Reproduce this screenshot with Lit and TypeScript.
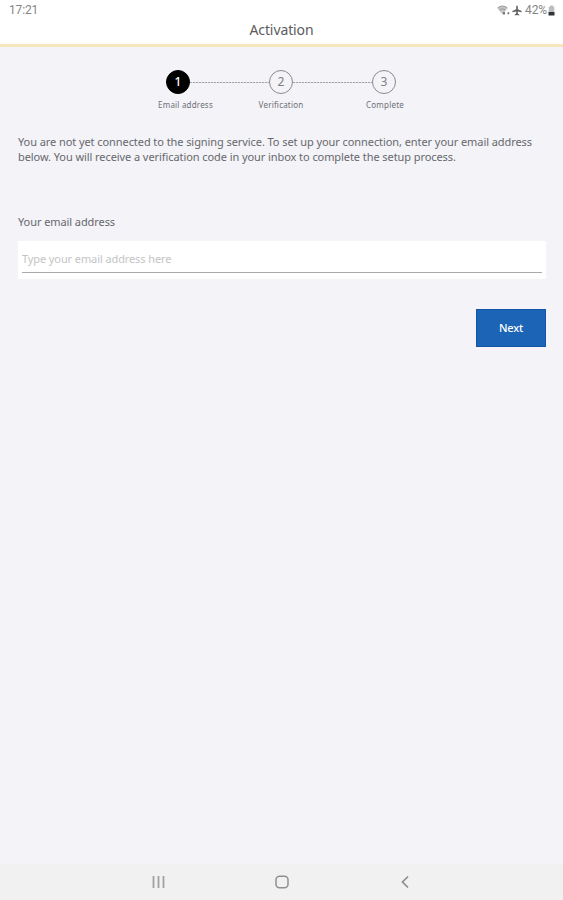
import { LitElement, html, css } from "lit";
import { customElement } from "lit/decorators.js";

@customElement("status-bar")
class StatusBar extends LitElement {
  static styles = css`
    :host {
      display: flex;
      justify-content: space-between;
      align-items: center;
      height: 20px;
      padding: 0 8px 0 9px;
      box-sizing: border-box;
      color: #858585;
      font: 12px/20px Roboto, sans-serif;
    }
    .right {
      display: flex;
      align-items: center;
    }
    .wifi { margin-right: 2px; }
    .plane { margin-right: 3px; }
    .time { letter-spacing: -0.15px; }
    .percent { letter-spacing: -0.1px; margin-right: 1px; }
    svg { display: block; }
  `;
  render() {
    return html`
      <span class="time">17:21</span>
      <span class="right">
        <svg class="wifi" width="13" height="11" viewBox="0 0 13 11">
          <path d="M0.5 3Q5.5-1 10.5 3L5.500 9.500Z" fill="#c4c4c4" />
          <path d="M0.5 3Q5.5-1 10.5 3M2.3 5Q5.5 2.7 8.5 5" fill="none" stroke="#999" stroke-width="1" />
          <path d="M6 7h2v2.600H6zM10.500 7.200h1.800v2h-1.800z" fill="#777" />
        </svg>
        <svg class="plane" width="10" height="11" viewBox="0 0 10 11">
          <path d="M5 .5q.8 0 .8 1.200v2.500L9.600 6v1.200L5.800 6.500v2l1.400 1v.9L5 9.900l-2.200.5v-.9l1.400-1v-2L.4 7.200V6l3.800-1.800V1.700Q4.200.5 5 .5z" fill="#606060" />
        </svg>
        <span class="percent">42%</span>
        <svg width="7" height="11" viewBox="0 0 7 11">
          <path d="M2 .5h3v1.200h1.300V7H.7V1.700H2z" fill="#bdbdbd" />
          <path d="M.5 7h6v3.500h-6z" fill="#333" />
        </svg>
      </span>
    `;
  }
}

@customElement("step-indicator")
class StepIndicator extends LitElement {
  static styles = css`
    :host {
      display: block;
      color: #707074;
      font-family: "Noto Sans", sans-serif;
    }
    .track {
      display: flex;
      align-items: center;
      margin-left: 166px;
    }
    .dot {
      width: 24px;
      height: 24px;
      flex: none;
      box-sizing: border-box;
      border: 1px solid #8a8a8e;
      border-radius: 50%;
      text-align: center;
      font-size: 12px;
      line-height: 22px;
      color: #808084;
    }
    .active {
      background: #000;
      border-color: #000;
      color: #fff;
      font-weight: 500;
    }
    .line {
      width: 79px;
      height: 1px;
      background: repeating-linear-gradient(90deg, #a4a4a8 0 2px, #dcdce0 2px 3px);
    }
    .labels {
      display: grid;
      grid-template-columns: 95px 96px 112px;
      margin: 5px 0 0 138px;
      text-align: center;
      font-size: 8px;
      line-height: 12px;
      letter-spacing: 0.2px;
    }
  `;
  render() {
    return html`
      <div class="track">
        <span class="dot active">1</span><span class="line"></span>
        <span class="dot">2</span><span class="line"></span>
        <span class="dot">3</span>
      </div>
      <div class="labels">
        <span>Email address</span><span>Verification</span><span>Complete</span>
      </div>
    `;
  }
}

@customElement("nav-bar")
class NavBar extends LitElement {
  static styles = css`
    :host {
      display: flex;
      justify-content: center;
      align-items: center;
      gap: 109px;
      height: 36px;
      background: #f1f1f1;
    }
    svg { display: block; }
  `;
  render() {
    return html`
      <svg width="14" height="14" viewBox="0 0 14 14" fill="none" stroke="#a2a2a2" stroke-width="1.8">
        <path d="M1.500 1v12M6.500 1v12M11.500 1v12" />
      </svg>
      <svg width="14" height="14" viewBox="0 0 14 14" fill="none" stroke="#909090" stroke-width="1.5">
        <rect x="1" y="1.300" width="12" height="11.400" rx="3.500" />
      </svg>
      <svg width="14" height="14" viewBox="0 0 14 14" fill="none" stroke="#8e8e8e" stroke-width="1.700">
        <path d="M10 1.500L4.500 7l5.500 5.500" />
      </svg>
    `;
  }
}

@customElement("app-root")
class AppRoot extends LitElement {
  static styles = css`
    :host {
      display: flex;
      flex-direction: column;
      height: 100vh;
      background: #f3f3f8;
      color: #68686c;
      font-family: "Noto Sans", sans-serif;
    }
    header {
      height: 47px;
      box-sizing: border-box;
      background: #fff;
      border-bottom: 3px solid #f8e6bd;
      flex: none;
    }
    h1 {
      margin: 0;
      text-align: center;
      font-size: 14px;
      font-weight: 400;
      line-height: 20px;
      letter-spacing: -0.1px;
      color: #5c5c5c;
    }
    main {
      flex: 1;
      padding-top: 23px;
    }
    .content {
      display: flex;
      flex-direction: column;
      padding: 0 17px 0 18px;
    }
    p {
      margin: 23px 0 0;
      font-size: 11px;
      line-height: 15px;
      letter-spacing: -0.074px;
      white-space: nowrap;
    }
    label {
      margin-top: 50px;
      font-size: 11px;
      line-height: 16px;
      letter-spacing: -0.08px;
    }
    .field {
      margin-top: 11px;
      height: 38px;
      box-sizing: border-box;
      padding: 5px 4px 6px;
      background: #fff;
    }
    input {
      display: block;
      width: 100%;
      height: 27px;
      box-sizing: border-box;
      padding: 0 0 2px;
      border: 0;
      border-bottom: 1px solid #aaa;
      background: none;
      outline: none;
      font: 11px "Noto Sans", sans-serif;
      letter-spacing: -0.1px;
    }
    input::placeholder {
      color: #c4c4c4;
      opacity: 1;
    }
    button {
      align-self: flex-end;
      margin-top: 30px;
      width: 70px;
      height: 38px;
      padding: 0 0 2px;
      border: 1px solid #1254a8;
      background: #1b64b6;
      color: #fff;
      font: 500 11px "Noto Sans", sans-serif;
      letter-spacing: -0.15px;
    }
  `;
  render() {
    return html`
      <header>
        <status-bar></status-bar>
        <h1>Activation</h1>
      </header>
      <main>
        <step-indicator></step-indicator>
        <div class="content">
          <p>
            You are not yet connected to the signing service. To set up your connection, enter your email address<br />
            below. You will receive a verification code in your inbox to complete the setup process.
          </p>
          <label for="email">Your email address</label>
          <div class="field">
            <input id="email" type="email" placeholder="Type your email address here" />
          </div>
          <button>Next</button>
        </div>
      </main>
      <nav-bar></nav-bar>
    `;
  }
}
